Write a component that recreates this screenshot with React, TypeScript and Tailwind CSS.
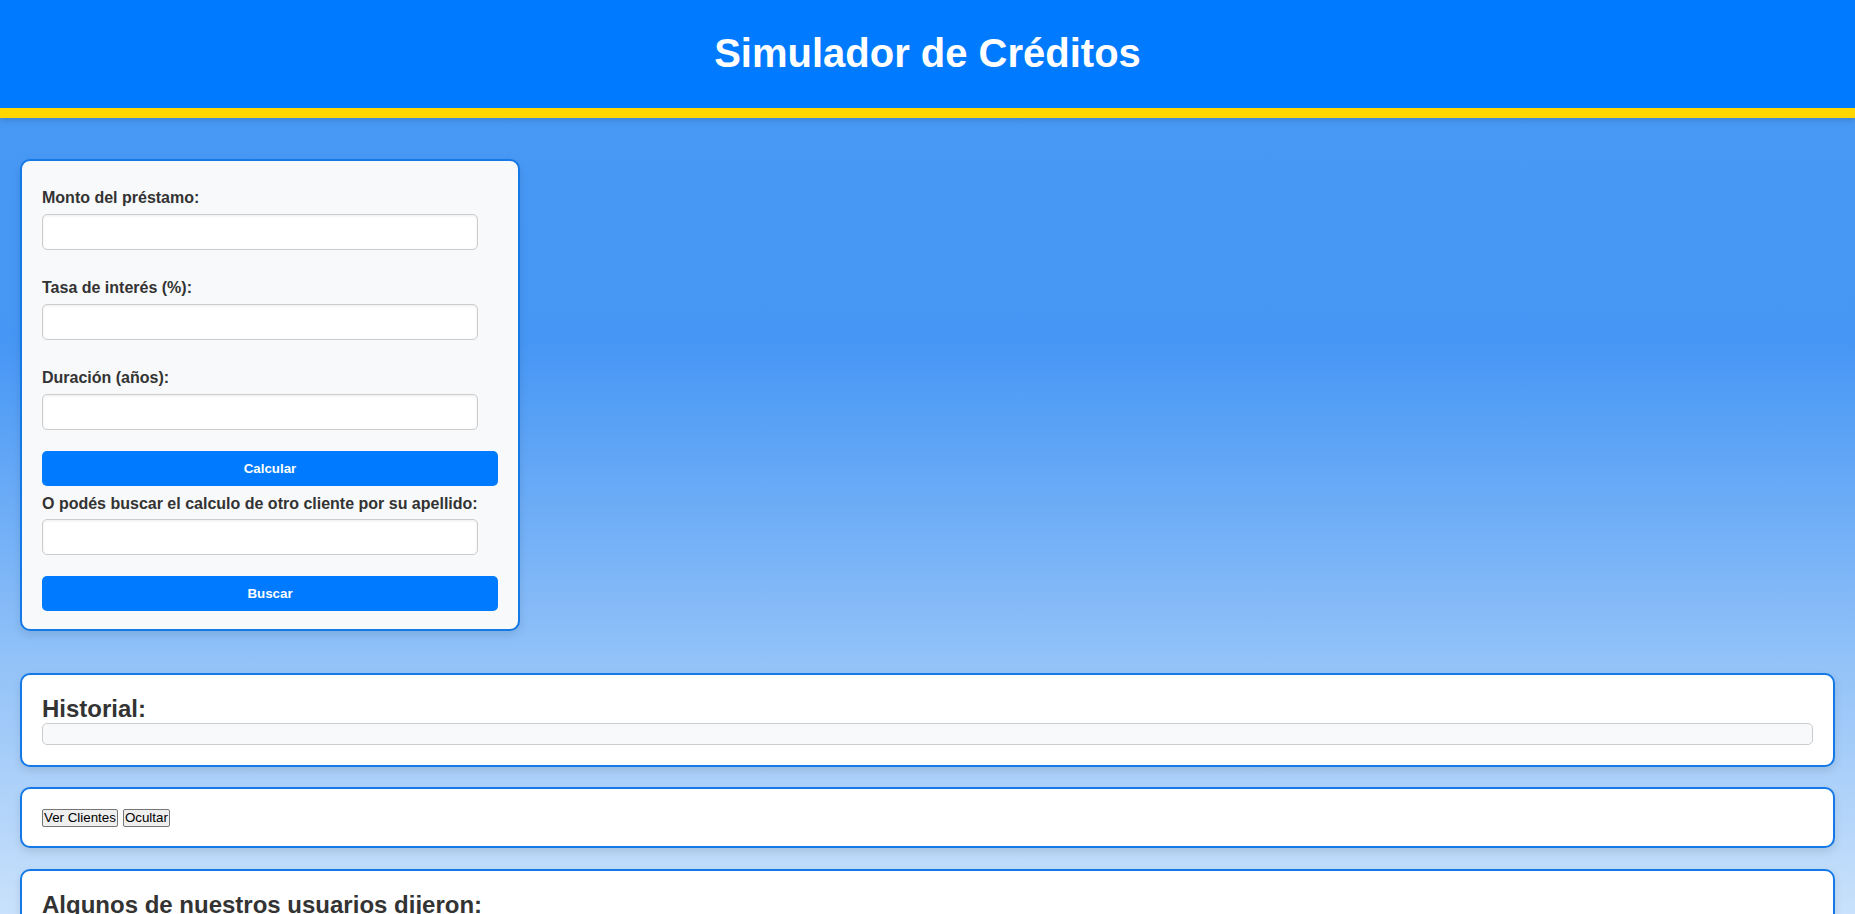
import { useState } from 'react';

const labelCls = 'block text-[16px] leading-[18px] font-bold text-[#333]';
const inputCls =
    'block w-[436px] h-[36px] px-[10px] bg-white border border-[#ccc] rounded-[5px] shadow-[inset_0_1px_3px_rgba(0,0,0,0.08)] text-[14px] outline-none';
const primaryBtn =
    'block w-full h-[35px] bg-[#007bff] text-white text-[13.33px] font-bold rounded-[5px] cursor-pointer';
const cardCls =
    'bg-white border-2 border-[#1479e6] rounded-[10px] shadow-[0_4px_8px_rgba(0,0,0,0.1)]';
const nativeBtn =
    'h-[18px] px-[1px] bg-[#efefef] border border-[#767676] rounded-[2px] text-[13.33px] leading-[16px] text-black';

export default function App() {
    const [monto, setMonto] = useState('');
    const [tasa, setTasa] = useState('');
    const [duracion, setDuracion] = useState('');
    const [apellido, setApellido] = useState('');

    return (
        <div className="min-h-screen font-['Liberation_Sans',Arial,sans-serif] text-[#333] bg-[linear-gradient(to_bottom,#4899f4_0px,#4696f5_340px,#4c9af5_370px,#94c3f8_670px,#c9e1fb_914px,#e6f1fd_1200px)]">
            <header className="h-[118px] bg-[#007bff] border-b-[10px] border-[#ffd700] shadow-[0_2px_6px_rgba(0,0,0,0.15)] flex items-center justify-center pb-[3px]">
                <h1 className="text-[40px] leading-[46px] font-bold text-white">Simulador de Créditos</h1>
            </header>

            <main className="px-[20px] pt-[41px] pb-[60px]">
                <form
                    onSubmit={(e) => e.preventDefault()}
                    className="w-[500px] bg-[#f8f9fa] border-2 border-[#1479e6] rounded-[10px] shadow-[0_4px_8px_rgba(0,0,0,0.1)] px-[20px] pt-[20px] pb-[18px]"
                >
                    <label className={`${labelCls} pt-[8px] mb-[7px]`}>Monto del préstamo:</label>
                    <input type="number" value={monto} onChange={(e) => setMonto(e.target.value)} className={`${inputCls} mb-[21px]`} />

                    <label className={`${labelCls} pt-[8px] mb-[7px]`}>Tasa de interés (%):</label>
                    <input type="number" value={tasa} onChange={(e) => setTasa(e.target.value)} className={`${inputCls} mb-[21px]`} />

                    <label className={`${labelCls} pt-[8px] mb-[7px]`}>Duración (años):</label>
                    <input type="number" value={duracion} onChange={(e) => setDuracion(e.target.value)} className={`${inputCls} mb-[21px]`} />

                    <button type="submit" className={primaryBtn}>Calcular</button>

                    <label className={`${labelCls} pt-[9px] mb-[6px]`}>O podés buscar el calculo de otro cliente por su apellido:</label>
                    <input type="text" value={apellido} onChange={(e) => setApellido(e.target.value)} className={`${inputCls} mb-[21px]`} />

                    <button type="button" className={primaryBtn}>Buscar</button>
                </form>

                <section className={`${cardCls} mt-[42px] p-[20px]`}>
                    <h2 className="text-[24px] leading-[27.6px] font-bold text-[#333]">Historial:</h2>
                    <div className="h-[22px] bg-[#f8f9fa] border border-[#ccc] rounded-[5px]" />
                </section>

                <section className={`${cardCls} mt-[20px] px-[20px] pt-[20px] pb-[19px]`}>
                    <div className="flex gap-[5px]">
                        <button type="button" className={nativeBtn}>Ver Clientes</button>
                        <button type="button" className={nativeBtn}>Ocultar</button>
                    </div>
                </section>

                <section className={`${cardCls} mt-[21px] p-[20px] min-h-[200px]`}>
                    <h2 className="text-[24px] leading-[27.6px] font-bold text-[#333]">Algunos de nuestros usuarios dijeron:</h2>
                </section>
            </main>
        </div>
    );
}
